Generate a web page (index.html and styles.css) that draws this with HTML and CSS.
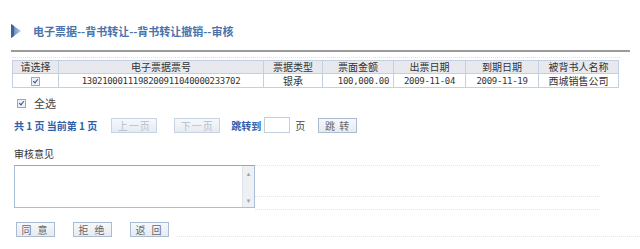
FILE: index.html
```html
<!DOCTYPE html>
<html lang="zh-CN">
<head>
    <meta charset="UTF-8">
    <title>电子票据--背书转让--背书转让撤销--审核</title>
    <link rel="stylesheet" href="styles.css">
</head>
<body>
    <div class="page">
        <div class="title">
            <svg class="arrow" width="10" height="14" viewBox="0 0 10 14">
                <defs>
                    <linearGradient id="ag" x1="0" y1="0" x2="1" y2="0">
                        <stop offset="0" stop-color="#4d79b5"/>
                        <stop offset="1" stop-color="#b9cde6"/>
                    </linearGradient>
                </defs>
                <polygon points="0,0 10,7 0,14" fill="url(#ag)"/>
                <polygon points="0,0 3,2 3,12 0,14" fill="#3c64a0"/>
            </svg>
            <span class="title-text">电子票据--背书转让--背书转让撤销--审核</span>
        </div>
        <div class="rule"></div>
        <div class="dots"></div>

        <table class="grid">
            <tr>
                <th class="c1">请选择</th>
                <th class="c2">电子票据票号</th>
                <th class="c3">票据类型</th>
                <th class="c4">票面金额</th>
                <th class="c5">出票日期</th>
                <th class="c6">到期日期</th>
                <th class="c7">被背书人名称</th>
            </tr>
            <tr>
                <td class="center"><span class="box checked"></span></td>
                <td class="center num">1302100011198200911040000233702</td>
                <td class="center">银承</td>
                <td class="right num">100,000.00</td>
                <td class="center num">2009-11-04</td>
                <td class="center num">2009-11-19</td>
                <td class="center">西城销售公司</td>
            </tr>
        </table>

        <div class="select-all">
            <span class="box checked"></span>
            <span>全选</span>
        </div>

        <div class="pager">
            <span class="blue">共 1 页 当前第 1 页</span>
            <span class="btn disabled prev">上一页</span>
            <span class="btn disabled next">下一页</span>
            <span class="blue jump">跳转到</span>
            <span class="page-input"></span>
            <span class="blue ye">页</span>
            <span class="btn go">跳 转</span>
        </div>

        <div class="opinion-label">审核意见</div>
        <div class="opinion-row">
            <div class="textarea">
                <div class="scroll">
                    <span class="up">&#9652;</span>
                    <span class="down">&#9662;</span>
                </div>
            </div>
            <div class="faint">
                <div class="fline"></div>
                <div class="fline l2"></div>
                <div class="fline l3"></div>
            </div>
        </div>

        <div class="actions">
            <span class="btn act">同 意</span>
            <span class="btn act">拒 绝</span>
            <span class="btn act">返 回</span>
            <div class="fline grow"></div>
        </div>
    </div>
</body>
</html>
```

FILE: styles.css
```css
body {
    margin: 0;
    background: #ffffff;
    font-family: "Noto Sans CJK SC", "DejaVu Sans", sans-serif;
    font-size: 11px;
    color: #444;
}

.page {
    width: 640px;
    height: 249px;
    overflow: hidden;
}

.title {
    display: flex;
    align-items: center;
    height: 14px;
    margin: 24px 0 0 11px;
}

.arrow {
    display: block;
}

.title-text {
    margin-left: 12px;
    color: #4b73aa;
    font-weight: bold;
    font-size: 11px;
    letter-spacing: 0;
    line-height: 14px;
}

.rule {
    margin: 12px 10px 0 11px;
    border-top: 2px solid #9b9b9b;
}

.dots {
    margin: 5px 20px 0 12px;
    border-top: 1px dotted #d8e0ea;
}

.grid {
    margin: 2px 0 0 12px;
    width: 607px;
    border-collapse: collapse;
    font-size: 10px;
}

.grid th,
.grid td {
    border: 1px solid #c3d0e0;
    height: 12px;
    padding: 0 4px;
    line-height: 12px;
    white-space: nowrap;
}

.grid th {
    background: #e7e9ee;
    font-weight: normal;
    color: #333;
}

.grid td {
    height: 13px;
    color: #333;
}

.c1 { width: 37px; }
.c2 { width: 196px; }
.c3 { width: 50px; }
.c4 { width: 62px; }
.c5 { width: 63px; }
.c6 { width: 64px; }

.center { text-align: center; }
.right { text-align: right; }

.num {
    font-family: "DejaVu Sans Mono", monospace;
    font-size: 9px;
    letter-spacing: -0.3px;
}

.box {
    display: inline-block;
    width: 7px;
    height: 7px;
    border: 1px solid #98a8c0;
    background: #eef2f8;
    position: relative;
    vertical-align: middle;
}

.box.checked::after {
    content: "";
    position: absolute;
    left: 2px;
    top: 0;
    width: 2px;
    height: 4px;
    border: solid #2f4f8a;
    border-width: 0 1px 1px 0;
    transform: rotate(40deg);
}

.select-all {
    display: flex;
    align-items: center;
    gap: 8px;
    margin: 9px 0 0 17px;
    height: 12px;
}

.pager {
    display: flex;
    align-items: center;
    height: 16px;
    margin: 8px 0 0 14px;
}

.blue {
    color: #2f5fa8;
    font-weight: bold;
    font-size: 10px;
}

.btn {
    display: inline-flex;
    align-items: center;
    justify-content: center;
    height: 14px;
    border: 1px solid #a9bcd4;
    background: linear-gradient(#f6f8fb, #e6ebf2);
    color: #555;
    font-size: 10px;
    letter-spacing: 1px;
    box-sizing: border-box;
}

.disabled {
    color: #b5bfcc;
    border-color: #c8d4e3;
}

.prev {
    width: 46px;
    height: 15px;
    margin-left: 14px;
}

.next {
    width: 46px;
    height: 15px;
    margin-left: 17px;
}

.jump {
    margin-left: 11px;
}

.page-input {
    width: 24px;
    height: 14px;
    border: 1px solid #c3cedd;
    margin-left: 3px;
    background: #fff;
}

.ye {
    margin-left: 5px;
    font-weight: normal;
    color: #444;
}

.go {
    width: 39px;
    height: 15px;
    margin-left: 13px;
    color: #666;
}

.opinion-label {
    margin: 14px 0 0 14px;
    font-size: 10px;
    color: #333;
    height: 13px;
    line-height: 13px;
}

.opinion-row {
    display: flex;
    margin: 5px 0 0 14px;
}

.textarea {
    display: flex;
    justify-content: flex-end;
    width: 241px;
    height: 43px;
    border: 1px solid #a9bfd8;
    border-top-color: #8ea9c9;
    box-sizing: border-box;
    background: #fff;
}

.scroll {
    display: flex;
    flex-direction: column;
    justify-content: space-between;
    align-items: center;
    width: 11px;
    background: #eef0f3;
    border-left: 1px solid #e0e4ea;
    color: #9aa3b0;
    font-size: 7px;
    line-height: 10px;
    padding: 2px 0;
}

.faint {
    flex: 1;
    display: flex;
    flex-direction: column;
    margin-right: 40px;
}

.fline {
    border-top: 1px dotted #e2e7ee;
}

.l2 {
    margin-top: 30px;
}

.l3 {
    margin-top: 12px;
}

.actions {
    display: flex;
    align-items: center;
    margin: 12px 0 0 16px;
}

.act {
    width: 39px;
    height: 15px;
    margin-right: 18px;
    color: #666;
    letter-spacing: 2px;
}

.grow {
    flex: 1;
    margin: 14px 0 0 -10px;
}
```
